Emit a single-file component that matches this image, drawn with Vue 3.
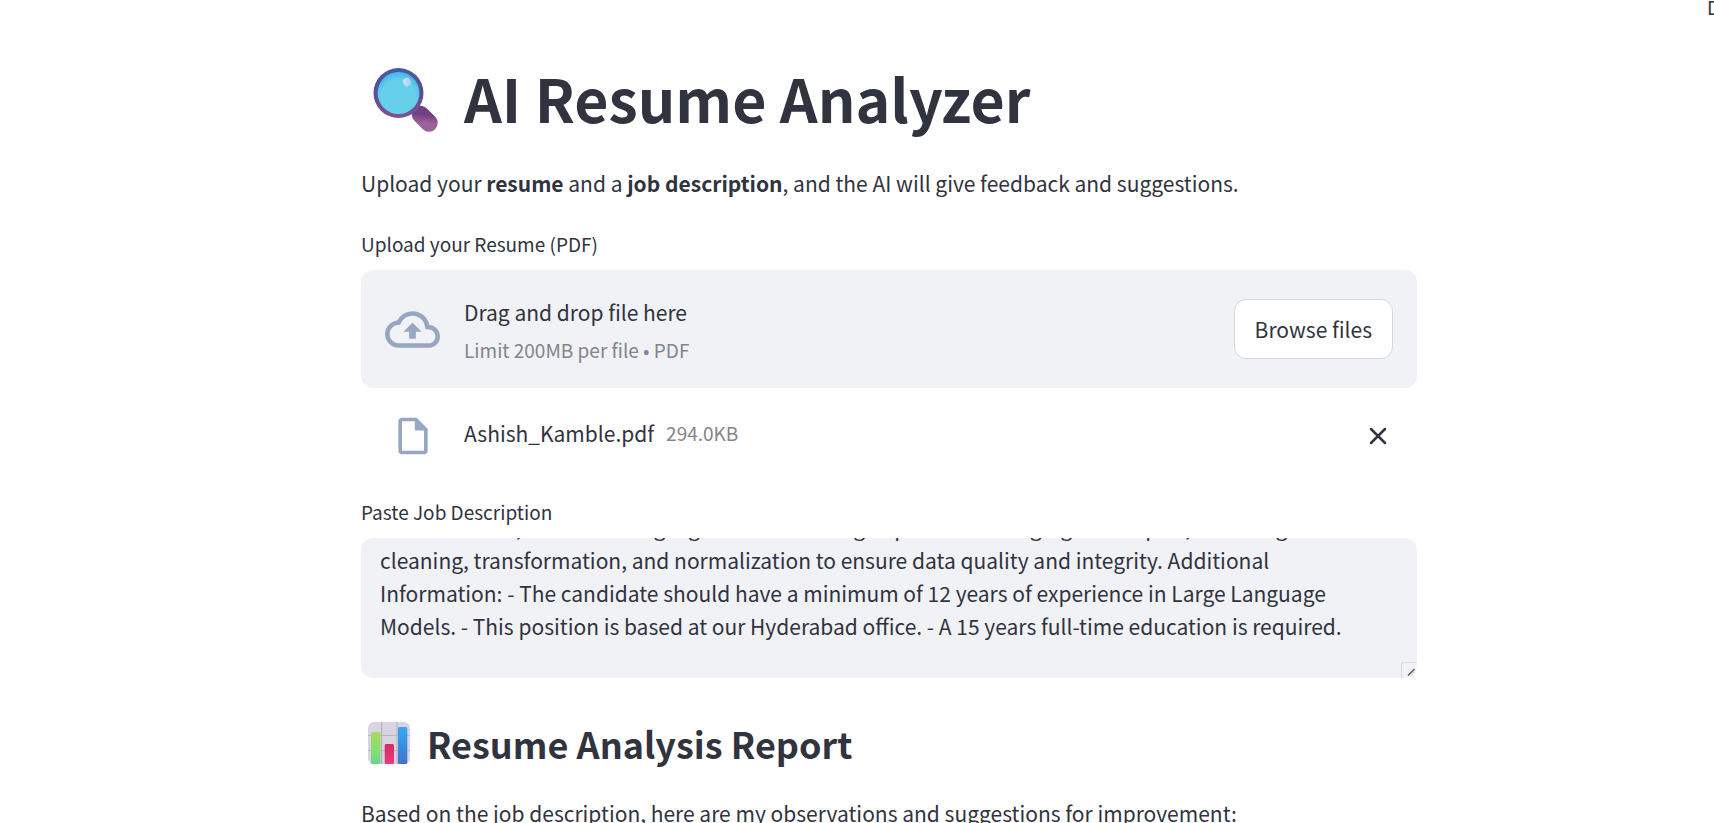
<script setup>
import { ref, onMounted } from 'vue'

const description = ref(
  'Solid experience in implementing various machine learning algorithms such as linear regression, logistic regression,\n' +
  'decision trees, and clustering algorithms. - Solid grasp of data munging techniques, including data\n' +
  'cleaning, transformation, and normalization to ensure data quality and integrity. Additional\n' +
  'Information: - The candidate should have a minimum of 12 years of experience in Large Language\n' +
  'Models. - This position is based at our Hyderabad office. - A 15 years full-time education is required.'
)
const box = ref(null)

onMounted(() => {
  box.value.scrollTop = box.value.scrollHeight
})
</script>

<template>
  <div class="page">
    <header class="toolbar"><button type="button" class="deploy">Deploy</button></header>
    <main class="content">
      <h1>
        <svg class="lens" viewBox="0 0 66 66" aria-hidden="true">
          <defs>
            <linearGradient id="rim" x1="0" y1="0" x2="0" y2="1">
              <stop offset="0" stop-color="#40609b" />
              <stop offset="0.5" stop-color="#5a4c94" />
              <stop offset="1" stop-color="#805290" />
            </linearGradient>
            <radialGradient id="glass" cx="0.5" cy="0.6" r="0.58">
              <stop offset="0.72" stop-color="#64d0ea" />
              <stop offset="1" stop-color="#4ab4ee" />
            </radialGradient>
            <linearGradient id="handle" x1="0.6" y1="0" x2="0.5" y2="1">
              <stop offset="0" stop-color="#6f4180" />
              <stop offset="1" stop-color="#9c6298" />
            </linearGradient>
            <linearGradient id="shine" x1="0" y1="0" x2="1" y2="1">
              <stop offset="0" stop-color="#dce6fa" />
              <stop offset="1" stop-color="#98cdf2" />
            </linearGradient>
          </defs>
          <path d="M47.500 47.500 56 56" stroke="url(#handle)" stroke-width="17.500" stroke-linecap="round" />
          <circle cx="25.500" cy="26" r="25" fill="url(#rim)" />
          <circle cx="25.500" cy="26" r="21" fill="url(#glass)" />
          <ellipse cx="34" cy="15" rx="3.800" ry="4.400" transform="rotate(-35 34 15)" fill="url(#shine)" />
        </svg>
        <span>AI Resume Analyzer</span>
      </h1>
      <p class="intro">Upload your <strong>resume</strong> and a <strong>job description</strong>, and the AI will give feedback and suggestions.</p>

      <section class="field upload">
        <label for="resume-file">Upload your Resume (PDF)</label>
        <div class="dropzone">
          <svg class="cloud" viewBox="0 0 24 24" aria-hidden="true">
            <path d="M19.35 10.04A7.49 7.49 0 0 0 12 4C9.11 4 6.6 5.64 5.35 8.04A5.994 5.994 0 0 0 0 14c0 3.310 2.690 6 6 6h13c2.760 0 5-2.240 5-5 0-2.640-2.050-4.780-4.650-4.960zM19 18H6c-2.210 0-4-1.790-4-4 0-2.050 1.530-3.760 3.560-3.970l1.070-.11.5-.95A5.469 5.469 0 0 1 12 6c2.620 0 4.880 1.860 5.390 4.430l.3 1.500 1.530.11A2.980 2.980 0 0 1 22 15c0 1.650-1.350 3-3 3zM8 13h2.550v3h2.900v-3H16l-4-4z" />
          </svg>
          <div class="hint">
            <span>Drag and drop file here</span>
            <small>Limit 200MB per file • PDF</small>
          </div>
          <button id="resume-file" type="button" class="browse">Browse files</button>
        </div>
        <div class="file">
          <span class="file-icon">
            <svg viewBox="0 0 24 24" aria-hidden="true">
              <path d="M6 2c-1.100 0-1.990.9-1.990 2L4 20c0 1.100.89 2 1.990 2H18c1.100 0 2-.9 2-2V8l-6-6H6zm0 18V4h7v5h5v11H6z" />
            </svg>
          </span>
          <span>Ashish_Kamble.pdf</span>
          <small>294.0KB</small>
          <button type="button" class="remove" aria-label="Remove file">
            <svg viewBox="0 0 18 18" aria-hidden="true"><path d="M2 2 16 16M16 2 2 16" /></svg>
          </button>
        </div>
      </section>

      <section class="field job">
        <label for="job">Paste Job Description</label>
        <div class="area">
          <textarea id="job" ref="box" v-model="description" wrap="off"></textarea>
          <svg class="grip" viewBox="0 0 16 16" aria-hidden="true">
            <path class="edge" d="M.5 16V.5H16" />
            <path class="slash" d="M7 13.500 13.500 7" />
            <path class="faint" d="M10 13.500 13.500 10" />
          </svg>
        </div>
      </section>

      <h3>
        <svg class="chart" viewBox="0 0 42 42" aria-hidden="true">
          <defs>
            <linearGradient id="green" x1="0" y1="0" x2="0" y2="1">
              <stop offset="0" stop-color="#acd95c" />
              <stop offset="0.6" stop-color="#82e072" />
              <stop offset="1" stop-color="#62d890" />
            </linearGradient>
            <linearGradient id="blue" x1="0" y1="0" x2="0" y2="1">
              <stop offset="0" stop-color="#34a8f4" />
              <stop offset="1" stop-color="#4274c8" />
            </linearGradient>
            <linearGradient id="pink" x1="0" y1="0" x2="0" y2="1">
              <stop offset="0" stop-color="#d02c68" />
              <stop offset="1" stop-color="#ee3a80" />
            </linearGradient>
          </defs>
          <rect width="42" height="42" rx="6" fill="#d9d3e2" />
          <path d="M13.600 0V42M29 0V42M0 13.500H42M0 28.500H42" stroke="#b9b4bf" stroke-width="1.200" />
          <rect x="3" y="10" width="9.500" height="32" rx="1.500" fill="url(#green)" />
          <rect x="16.700" y="22" width="9.300" height="20" rx="1.500" fill="url(#pink)" />
          <rect x="30" y="5" width="9.300" height="37" rx="1.500" fill="url(#blue)" />
        </svg>
        <span>Resume Analysis Report</span>
      </h3>
      <p class="outro">Based on the job description, here are my observations and suggestions for improvement:</p>
    </main>
  </div>
</template>

<style>
body {
  overflow: hidden;
  background: #fff;
}
</style>

<style scoped>
.page {
  position: relative;
  box-sizing: border-box;
  padding: 60px 0 0 64px;
  color: #31333f;
  font: 21px/38px "Noto Sans CJK JP", "Noto Sans", sans-serif;
}
.page * {
  box-sizing: border-box;
}
button,
textarea {
  font: inherit;
  color: inherit;
}
svg {
  display: block;
  flex: none;
}
.toolbar {
  position: absolute;
  top: 0;
  left: 100%;
  display: flex;
  margin-left: -7px;
}
.deploy {
  padding: 0;
  border: 0;
  background: none;
  font-size: 19px;
  line-height: 14px;
}
.content {
  max-width: 1056px;
  margin: 0 auto;
}
h1,
h3,
p {
  margin: 0;
}
h1 {
  display: flex;
  align-items: center;
  gap: 25px;
  padding-left: 12px;
  font-size: 59px;
  font-weight: 700;
  line-height: 76px;
}
.lens {
  width: 66px;
  height: 66px;
  margin-top: 4px;
}
.intro {
  margin-top: 28px;
}
strong {
  font-weight: 600;
}
.field {
  display: flex;
  flex-direction: column;
}
.upload {
  margin-top: 26px;
}
.job {
  margin-top: 38px;
}
label {
  font-size: 19px;
  line-height: 32px;
  margin-bottom: 10px;
}
.dropzone {
  display: flex;
  align-items: center;
  gap: 24px;
  padding: 0 24px;
  min-height: 118px;
  border-radius: 12px;
  background: #f0f2f6;
}
.cloud {
  width: 55px;
  height: 55px;
  fill: #97a6c3;
}
.hint {
  flex: 1;
  display: flex;
  flex-direction: column;
  gap: 4px;
  padding-top: 4px;
  line-height: 34px;
}
small {
  font-size: 19px;
  color: #83858c;
}
.browse {
  height: 60px;
  padding: 0 20px;
  border: 1px solid #d6d7db;
  border-radius: 12px;
  background: #fff;
}
.file {
  display: flex;
  align-items: flex-start;
  padding: 26px 24px 0;
}
.file-icon {
  display: flex;
  justify-content: center;
  width: 55px;
  margin-right: 24px;
}
.file-icon svg {
  width: 44px;
  height: 44px;
  fill: #97a6c3;
}
.file small {
  flex: 1;
  margin-left: 12px;
}
.remove {
  align-self: center;
  padding: 6px;
  border: 0;
  background: none;
}
.remove svg {
  width: 18px;
  height: 18px;
  fill: none;
  stroke: #31333f;
  stroke-width: 2.5;
  stroke-linecap: round;
}
.area {
  position: relative;
  height: 140px;
  border-radius: 12px;
  background: #f0f2f6;
  overflow: hidden;
}
textarea {
  display: block;
  width: 100%;
  height: 140px;
  padding: 18px 19px 35px;
  border: 0;
  outline: 0;
  background: none;
  resize: none;
  line-height: 33px;
  overflow: hidden;
}
.grip {
  position: absolute;
  right: 0;
  bottom: 0;
  width: 16px;
  height: 16px;
  fill: none;
}
.edge {
  stroke: #d8d9dc;
}
.slash {
  stroke: #55565c;
  stroke-width: 1.5;
}
.faint {
  stroke: #c4c5c9;
}
h3 {
  display: flex;
  align-items: center;
  gap: 17px;
  margin-top: 40px;
  padding-left: 7px;
  font-size: 36px;
  font-weight: 600;
  line-height: 50px;
}
.chart {
  width: 42px;
  height: 42px;
}
.outro {
  margin-top: 26px;
}
</style>
